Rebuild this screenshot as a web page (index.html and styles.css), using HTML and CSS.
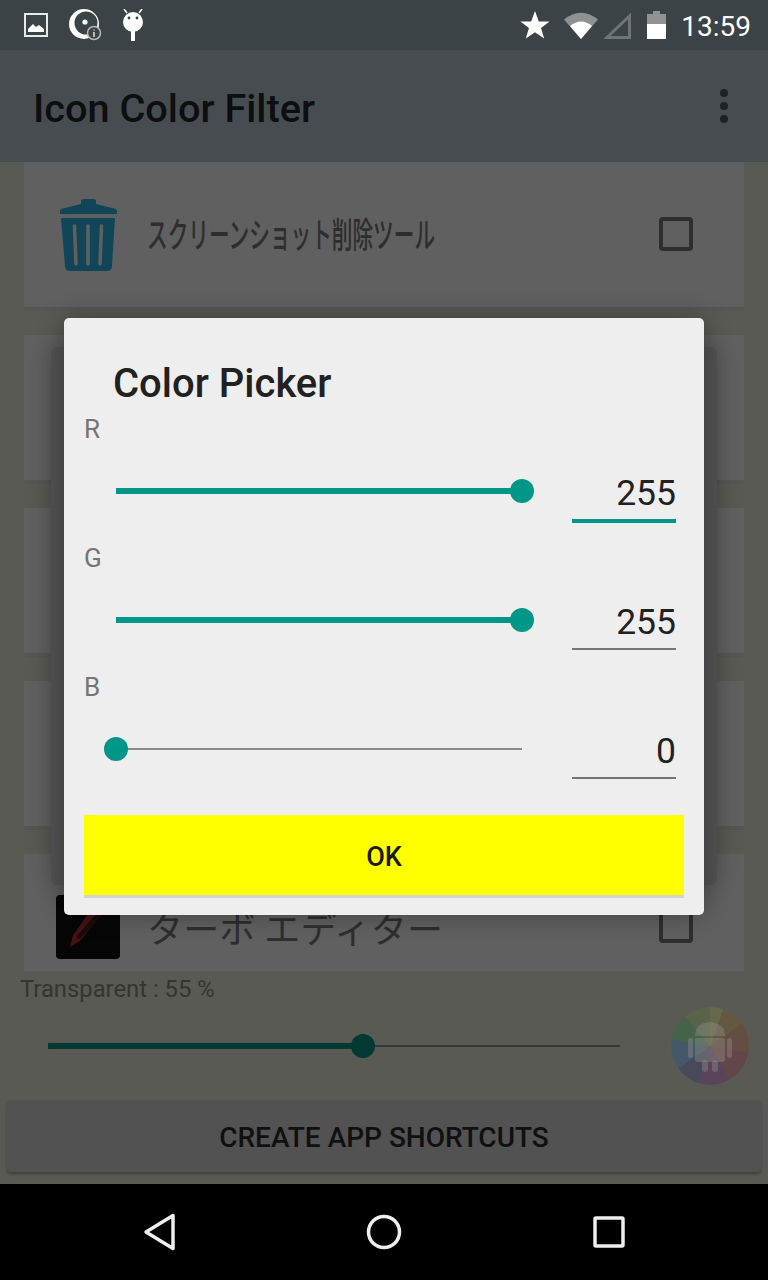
FILE: index.html
```html
<!DOCTYPE html>
<html lang="ja">
<head>
    <meta charset="UTF-8">
    <meta name="viewport" content="width=device-width, initial-scale=1.0">
    <title>Icon Color Filter</title>
    <link rel="stylesheet" href="styles.css">
</head>
<body>

<div class="screen">
    <div class="status-bar">
        <div class="status-left">
            <svg class="ico-image" width="24" height="24" viewBox="0 0 24 24">
                <rect x="1" y="1" width="22" height="22" fill="none" stroke="#e8e9e9" stroke-width="2"/>
                <path d="M4 19V16L9 11L12 14L15 12L20 16V19Z" fill="#fff"/>
            </svg>
            <svg class="ico-disc" width="34" height="32" viewBox="0 0 34 32">
                <circle cx="16" cy="15" r="15" fill="#fff"/>
                <circle cx="18" cy="14" r="11.5" fill="#3c4347"/>
                <circle cx="17" cy="13" r="2.6" fill="#fff"/>
                <circle cx="26" cy="24" r="6.5" fill="#3c4347" stroke="#b5b7b8" stroke-width="1.5"/>
                <path d="M26 23V28M26 20.5V21.5" stroke="#d5d6d6" stroke-width="1.6"/>
            </svg>
            <svg class="ico-droid" width="22" height="32" viewBox="0 0 22 32">
                <path d="M5 4L2 0M17 4L20 0" stroke="#fff" stroke-width="1.6"/>
                <circle cx="11" cy="13" r="10" fill="#fff"/>
                <circle cx="7" cy="9" r="1.4" fill="#3c4347"/>
                <circle cx="15" cy="9" r="1.4" fill="#3c4347"/>
                <rect x="9" y="21" width="4" height="11" fill="#fff"/>
            </svg>
        </div>
        <div class="status-right">
            <svg class="ico-star" width="30" height="28" viewBox="0 0 30 28">
                <path d="M15 0L18.8 10.4H29.6L21 17L24.2 27.6L15 21.2L5.8 27.6L9 17L.4 10.4H11.2Z" fill="#fff"/>
            </svg>
            <svg class="ico-wifi" width="34" height="28" viewBox="0 0 34 28">
                <path d="M17 28L0 8.500Q17 -5 34 8.500Z" fill="#8f9293"/>
                <path d="M17 28L6 15Q17 6 28 15Z" fill="#fff"/>
            </svg>
            <svg class="ico-signal" width="29" height="28" viewBox="0 0 29 28">
                <path d="M26.500 5V26.500H4Z" fill="none" stroke="#6f7476" stroke-width="3"/>
            </svg>
            <svg class="ico-battery" width="20" height="28" viewBox="0 0 20 28">
                <path d="M6 0H13V3H19V10H0V3H6Z" fill="#8f9293"/>
                <rect y="13" width="19" height="15" fill="#fff"/>
                <rect y="10" width="19" height="3" fill="#8f9293"/>
            </svg>
            <span class="clock">13:59</span>
        </div>
    </div>

    <div class="app-bar">
        <h1>Icon Color Filter</h1>
        <div class="overflow"><span></span><span></span><span></span></div>
    </div>

    <div class="content">
        <div class="list">
            <div class="row">
                <svg class="trash" width="58" height="74" viewBox="0 0 58 74">
                    <path d="M1 16V13Q1 11 4 10.500L22 6V3Q22 1 25 1H34Q37 1 37 3V6L55 10.500Q58 11 58 13V16Z" fill="#114659"/>
                    <path d="M2 20H56L53 68Q53 73 48 73H11Q6 73 6 68Z" fill="#114659"/>
                    <path d="M15.500 28L17 66M29 28V66M42.500 28L41 66" stroke="#606060" stroke-width="3.500" stroke-linecap="round"/>
                </svg>
                <span class="app-name narrow">スクリーンショット削除ツール</span>
                <span class="check"></span>
            </div>
            <div class="row"></div>
            <div class="row"></div>
            <div class="row"></div>
            <div class="row">
                <svg class="pencil" width="64" height="64" viewBox="0 0 64 64">
                    <rect width="64" height="64" rx="4" fill="#060606"/>
                    <path d="M40 8L50 14L24 46L14 52L17 40Z" fill="#451214"/>
                    <path d="M41 18L45 21L24 44L20 42Z" fill="#1c0a0a"/>
                </svg>
                <span class="app-name wide">ターボ エディター</span>
                <span class="check"></span>
            </div>
        </div>

        <div class="transparent-label">Transparent : 55 %</div>
        <div class="transparent-row">
            <div class="dim-slider">
                <div class="dim-fill"></div>
                <div class="dim-thumb"></div>
            </div>
            <div class="wheel">
                <svg width="78" height="78" viewBox="0 0 78 78">
                    <g fill="#9a9a92" fill-opacity="0.35">
                        <path d="M24 29Q24 16 39 15Q54 16 54 29Z"/>
                        <rect x="24" y="31" width="30" height="24" rx="2"/>
                        <rect x="17" y="31" width="5" height="20" rx="2.500"/>
                        <rect x="56" y="31" width="5" height="20" rx="2.500"/>
                        <rect x="31" y="53" width="6" height="12" rx="3"/>
                        <rect x="41" y="53" width="6" height="12" rx="3"/>
                    </g>
                </svg>
            </div>
        </div>

        <button class="shortcuts" type="button">CREATE APP SHORTCUTS</button>
    </div>

    <div class="nav-bar">
        <svg width="32" height="38" viewBox="0 0 32 38">
            <path d="M30 2.500V35.500L3 19Z" fill="none" stroke="#eee" stroke-width="3.500" stroke-linejoin="round"/>
        </svg>
        <svg width="36" height="36" viewBox="0 0 36 36">
            <circle cx="18" cy="18" r="15.500" fill="none" stroke="#eee" stroke-width="3.500"/>
        </svg>
        <svg width="32" height="32" viewBox="0 0 32 32">
            <rect x="2" y="2" width="28" height="28" rx="1" fill="none" stroke="#eee" stroke-width="3.500"/>
        </svg>
    </div>

    <div class="dialog-back"></div>

    <div class="dialog">
        <h2>Color Picker</h2>

        <div class="channel">
            <label>R</label>
            <div class="channel-row">
                <div class="slider">
                    <div class="fill fill-full"></div>
                    <div class="thumb thumb-end"></div>
                </div>
                <div class="value value-active">255</div>
            </div>
        </div>
        <div class="channel">
            <label>G</label>
            <div class="channel-row">
                <div class="slider">
                    <div class="fill fill-full"></div>
                    <div class="thumb thumb-end"></div>
                </div>
                <div class="value">255</div>
            </div>
        </div>
        <div class="channel">
            <label>B</label>
            <div class="channel-row">
                <div class="slider">
                    <div class="thumb thumb-start"></div>
                </div>
                <div class="value">0</div>
            </div>
        </div>

        <button class="ok" type="button">OK</button>
    </div>
</div>

</body>
</html>
```

FILE: styles.css
```css
body {
    margin: 0;
    font-family: Roboto, sans-serif;
    background-color: #000;
}
.screen {
    position: relative;
    width: 768px;
    height: 1280px;
    overflow: hidden;
    display: flex;
    flex-direction: column;
}

/* Status bar */
.status-bar {
    height: 50px;
    background-color: #3c4347;
    display: flex;
    justify-content: space-between;
    align-items: center;
    flex-shrink: 0;
}
.status-bar svg {
    display: block;
}
.status-left {
    display: flex;
    align-items: center;
    margin-left: 24px;
}
.ico-disc {
    margin-left: 20px;
}
.ico-droid {
    margin-left: 20px;
}
.status-right {
    display: flex;
    align-items: center;
    margin-right: 17px;
}
.ico-wifi {
    margin-left: 14px;
}
.ico-signal {
    margin-left: 5px;
}
.ico-battery {
    margin-left: 15px;
}
.clock {
    margin-left: 14px;
    padding-top: 2px;
    color: #fff;
    font-size: 28px;
}

/* App bar */
.app-bar {
    height: 112px;
    background-color: #474c51;
    display: flex;
    justify-content: space-between;
    align-items: center;
    padding: 0 40px 0 33px;
    flex-shrink: 0;
}
.app-bar h1 {
    margin: 0;
    padding-top: 4px;
    font-size: 39.700px;
    font-weight: 500;
    color: #0c0e0f;
}
.overflow {
    display: flex;
    flex-direction: column;
    gap: 5px;
}
.overflow span {
    width: 8px;
    height: 8px;
    border-radius: 50%;
    background-color: #1f2224;
}

/* Background page */
.content {
    flex: 1;
    background-color: #595a53;
}
.list {
    height: 809px;
    overflow: hidden;
    padding: 0 24px;
}
.row {
    height: 145px;
    box-sizing: content-box;
    margin-bottom: 24px;
    padding: 0 51px 0 32px;
    background-color: #606060;
    border-bottom: 4px solid #565656;
    display: flex;
    align-items: center;
}
.trash {
    margin-left: 3px;
    margin-right: 30px;
    flex-shrink: 0;
}
.pencil {
    margin-right: 27px;
    flex-shrink: 0;
}
.app-name {
    font-family: "Noto Sans CJK JP", sans-serif;
    font-size: 32px;
    color: #2e2e2e;
    white-space: nowrap;
}
.narrow {
    margin-top: -4px;
    font-size: 35px;
    font-weight: 500;
    transform: scaleX(0.59);
    transform-origin: left center;
}
.wide {
    font-size: 36px;
    letter-spacing: 0.3px;
}
.check {
    width: 34px;
    height: 34px;
    margin-top: -2px;
    box-sizing: border-box;
    border: 4px solid #2e2e2e;
    border-radius: 4px;
    margin-left: auto;
    flex-shrink: 0;
}
.transparent-label {
    margin: 5px 0 0 20px;
    font-size: 23.800px;
    line-height: 27px;
    color: #343531;
}
.transparent-row {
    display: flex;
    align-items: center;
    justify-content: space-between;
    margin-top: 4px;
    padding: 0 19px 0 48px;
}
.dim-slider {
    position: relative;
    width: 572px;
    height: 2px;
    background-color: #383836;
}
.dim-fill {
    width: 315px;
    height: 6px;
    position: relative;
    top: -2px;
    background-color: #003a33;
}
.dim-thumb {
    position: absolute;
    left: 303px;
    top: -11px;
    width: 24px;
    height: 24px;
    border-radius: 50%;
    background-color: #003a33;
}
.wheel {
    width: 78px;
    height: 78px;
    border-radius: 50%;
    background: conic-gradient(#67674b 0 20deg, #655841 20deg 55deg, #644d43 55deg 100deg, #634649 100deg 150deg, #594459 150deg 195deg, #484a5b 195deg 235deg, #445968 235deg 280deg, #45624a 280deg 320deg, #58634a 320deg 360deg);
}
.wheel svg {
    display: block;
}
.shortcuts {
    display: block;
    width: 754px;
    height: 72px;
    margin: 15px 0 0 7px;
    padding-top: 3px;
    border: none;
    border-radius: 4px;
    background-color: #525252;
    box-shadow: 0 2px 3px rgba(0, 0, 0, 0.3);
    font-family: Roboto, sans-serif;
    font-size: 28px;
    font-weight: 500;
    color: #101010;
}

/* Nav bar */
.nav-bar {
    height: 96px;
    background-color: #000;
    flex-shrink: 0;
    position: relative;
    display: flex;
    justify-content: space-between;
    align-items: center;
    padding: 0 143px;
}

/* Dialogs */
.dialog-back {
    position: absolute;
    left: 51px;
    top: 347px;
    width: 666px;
    height: 538px;
    border-radius: 6px;
    background-color: #525252;
    box-shadow: 0 0 24px rgba(0, 0, 0, 0.22);
}
.dialog {
    position: absolute;
    left: 64px;
    top: 318px;
    width: 640px;
    height: 597px;
    box-sizing: border-box;
    padding: 0 20px;
    border-radius: 5px;
    background-color: #eee;
    box-shadow: 0 0 26px rgba(0, 0, 0, 0.32);
}
.dialog h2 {
    margin: 0 0 6px;
    padding: 43px 0 0 29px;
    font-size: 40px;
    line-height: 46px;
    font-weight: 500;
    color: #212121;
}
.channel {
    height: 129px;
}
.channel label {
    display: block;
    height: 32px;
    font-size: 26px;
    line-height: 32px;
    color: #757575;
}
.channel-row {
    display: flex;
    align-items: center;
    justify-content: space-between;
    padding: 0 8px 0 32px;
    height: 92px;
}
.slider {
    position: relative;
    width: 406px;
    height: 2px;
    background-color: #8a8a8a;
}
.fill {
    position: absolute;
    top: -2px;
    height: 6px;
    background-color: #009688;
}
.fill-full {
    width: 100%;
}
.thumb {
    position: absolute;
    top: -11px;
    width: 24px;
    height: 24px;
    border-radius: 50%;
    background-color: #009688;
}
.thumb-end {
    right: -12px;
}
.thumb-start {
    left: -12px;
}
.value {
    width: 104px;
    height: 56px;
    margin-top: 4px;
    box-sizing: border-box;
    border-bottom: 2px solid #757575;
    text-align: right;
    font-size: 35.500px;
    line-height: 56px;
    color: #212121;
}
.value-active {
    height: 60px;
    line-height: 60px;
    border-bottom: 4px solid #009688;
}
.ok {
    display: block;
    width: 600px;
    height: 80px;
    margin-top: 15px;
    padding-top: 4px;
    border: none;
    background-color: #ff0;
    box-shadow: 0 3px 0 #d3d3d3;
    font-family: Roboto, sans-serif;
    font-size: 27px;
    font-weight: 500;
    color: #1a1a00;
}
```
